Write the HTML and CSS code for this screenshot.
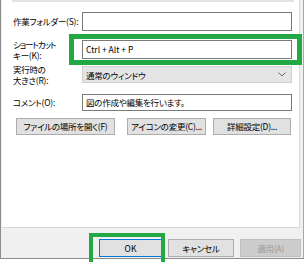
FILE: index.html
```html
<!DOCTYPE html>
<html lang="ja">
<head>
  <meta charset="UTF-8" />
  <title>ショートカットのプロパティ</title>
  <link rel="stylesheet" href="styles.css">
</head>
<body>
  <div class="dialog">
    <div class="panel">
      <div class="top-edge"></div>

      <div class="row row-folder">
        <label class="label">作業フォルダー(S):</label>
        <div class="field"></div>
      </div>

      <div class="row row-key">
        <label class="label"><span class="tight">ショートカット</span><br>キー(K):</label>
        <div class="field">Ctrl + Alt + P</div>
      </div>

      <div class="row row-size">
        <label class="label">実行時の<br>大きさ(R):</label>
        <div class="select">
          <span>通常のウィンドウ</span>
          <svg class="chevron" width="8" height="5" viewBox="0 0 8 5">
            <polyline points="0.5,0.5 4,4 7.5,0.5" fill="none" stroke="#6d6d6d" stroke-width="1"/>
          </svg>
        </div>
      </div>

      <div class="row row-comment">
        <label class="label">コメント(O):</label>
        <div class="field">図の作成や編集を行います。</div>
      </div>

      <div class="actions">
        <button class="btn btn-open">ファイルの場所を開く(F)</button>
        <button class="btn btn-icon">アイコンの変更(C)...</button>
        <button class="btn btn-adv">詳細設定(D)...</button>
      </div>

      <!-- highlight drawn over the shortcut key field -->
      <div class="mark mark-key"></div>
    </div>

    <div class="footer">
      <button class="btn btn-ok">OK</button>
      <button class="btn btn-cancel">キャンセル</button>
      <button class="btn btn-apply" disabled>適用(A)</button>
      <div class="mark mark-ok"></div>
    </div>
  </div>
</body>
</html>
```

FILE: styles.css
```css
body {
  margin: 0;
  width: 308px;
  height: 262px;
  overflow: hidden;
  background: #fff;
  font-family: "Noto Sans CJK JP", "Noto Sans", sans-serif;
  font-size: 8.5px;
  letter-spacing: -0.25px;
  font-feature-settings: "palt";
  color: #000;
}

.dialog {
  width: 302px;
  border-left: 1px solid #8c8c8c;
  border-right: 1px solid #a8a8a8;
  border-bottom: 1px solid #8c8c8c;
  background: #f0f0f0;
}

.panel {
  position: relative;
  width: 298px;
  height: 228px;
  margin-left: 1px;
  background: #fff;
  border-right: 1px solid #d9d9d9;
  border-bottom: 1px solid #d9d9d9;
  padding-left: 10px;
  box-sizing: border-box;
}

.top-edge {
  width: 282px;
  height: 2px;
  background: #e3e3e3;
}

.row {
  display: flex;
  align-items: center;
  height: 23px;
}

.row-folder { margin-top: 8px; }
.row-key { margin-top: 5px; }
.row-size { margin-top: 2px; }
.row-comment { margin-top: 5px; height: 22px; }

.label {
  flex: none;
  width: 70px;
  padding-left: 1px;
  box-sizing: border-box;
  line-height: 11px;
  white-space: nowrap;
}

.tight {
  letter-spacing: -1.1px;
}

.field {
  flex: none;
  width: 210px;
  height: 19px;
  box-sizing: border-box;
  border: 1px solid #7a7a7a;
  background: #fff;
  padding-left: 3px;
  line-height: 17px;
  white-space: nowrap;
}

.row-key .field {
  letter-spacing: 0;
}

.row-comment .field {
  height: 17px;
  line-height: 15px;
}

.select {
  flex: none;
  display: flex;
  align-items: center;
  justify-content: space-between;
  width: 210px;
  height: 17px;
  box-sizing: border-box;
  border: 1px solid #cfcfcf;
  background: #e5e5e5;
  padding: 0 5px 0 3px;
}

.chevron {
  display: block;
}

.actions {
  display: flex;
  margin-top: 5px;
  margin-left: 4px;
}

.btn {
  height: 17px;
  box-sizing: border-box;
  border: 1px solid #adadad;
  background: #e1e1e1;
  font-family: inherit;
  font-size: 8.5px;
  letter-spacing: -0.25px;
  font-feature-settings: "palt";
  color: #000;
  padding: 0;
  line-height: 15px;
  text-align: center;
  white-space: nowrap;
}

.btn-open { width: 99px; }
.btn-icon { width: 79px; margin-left: 12px; }
.btn-adv { width: 78px; margin-left: 7px; }

.footer {
  position: relative;
  display: flex;
  justify-content: flex-end;
  gap: 6px;
  height: 30px;
  padding: 11px 2px 0 0;
  box-sizing: border-box;
}

.footer .btn {
  height: 18px;
  line-height: 16px;
}

.btn-ok {
  width: 63px;
  border-color: #0078d7;
  letter-spacing: 0;
}

.btn-cancel { width: 66px; }

.btn-apply {
  width: 61px;
  background: #cccccc;
  border-color: #bfbfbf;
  color: #9a9a9a;
}

.mark {
  position: absolute;
  border: 5px solid #23a846;
  box-sizing: border-box;
}

.mark-key {
  left: 67px;
  top: 34px;
  width: 233px;
  height: 31px;
}

.mark-ok {
  left: 88px;
  top: 5px;
  width: 76px;
  height: 40px;
  border-width: 4px;
}
```
